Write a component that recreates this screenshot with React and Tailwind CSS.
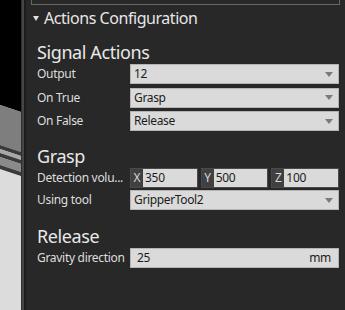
import React from "react";

const font = { fontFamily: '"Noto Sans", "Open Sans", sans-serif' };

function Arrow() {
  return (
    <svg width="8" height="5" viewBox="0 0 8 5" className="shrink-0">
      <path d="M0 0 H8 L4 5 Z" fill="#7a7a7a" />
    </svg>
  );
}

function Select({ value }) {
  return (
    <div className="flex-1 h-[20px] bg-[#dadada] border border-[#b4b4b4] flex items-center pl-[3px] pr-[5px] text-[12px] tracking-[-0.35px] text-[#1c1c1c]">
      <span className="flex-1 leading-none">{value}</span>
      <Arrow />
    </div>
  );
}

function Row({ label, children }) {
  return (
    <div className="flex items-center h-[20px]">
      <div className="w-[93px] shrink-0 text-[12px] tracking-[-0.3px] text-[#dedede] leading-none whitespace-nowrap">{label}</div>
      <div className="flex-1 flex gap-[3px]">{children}</div>
    </div>
  );
}

function Vec({ axis, value }) {
  return (
    <div className="flex-1 h-[20px] flex border border-[#4a4a4a]">
      <div className="w-[12px] bg-[#404040] text-[#d8d8d8] text-[12px] flex items-center justify-center leading-none">{axis}</div>
      <div className="flex-1 bg-[#dadada] flex items-center pl-[2px] text-[12px] tracking-[-0.3px] text-[#1c1c1c] leading-none">{value}</div>
    </div>
  );
}

function Title({ children, className = "" }) {
  return <div className={"text-[18px] tracking-[-0.4px] leading-[24px] text-[#e8e8e8] " + className}>{children}</div>;
}

export default function App() {
  return (
    <div className="w-[345px] h-[310px] flex bg-[#282828] overflow-hidden" style={font}>
      <div className="w-[21px] h-full shrink-0">
        <svg width="21" height="310" viewBox="0 0 21 310">
          <rect width="21" height="310" fill="#dcdcdc" />
          <polygon points="0,0 21,0 21,112 0,105" fill="#000" />
          <polygon points="0,105 21,112 21,152 0,145" fill="#7e7e7e" />
          <polygon points="0,145 21,152 21,156 0,149" fill="#3a3a3a" />
          <polygon points="0,149 21,156 21,160 0,153" fill="#a8a8a8" />
          <polygon points="0,153 21,160 21,164 0,157" fill="#3a3a3a" />
          <polygon points="0,157 21,164 21,172 0,165" fill="#8a8a8a" />
          <polygon points="0,165 21,172 21,176 0,169" fill="#3a3a3a" />
        </svg>
      </div>
      <div className="w-[1px] bg-[#2e2e2e] shrink-0" />
      <div className="w-[2px] bg-[#454545] shrink-0" />
      <div className="w-[2px] bg-[#1c1c1c] shrink-0" />
      <div className="flex-1 flex flex-col">
        <div className="mx-[5px] h-[5px] border-l border-r border-b border-[#686868]" />
        <div className="mt-[3px] pl-[7px] flex items-center gap-[5px] h-[20px]">
          <svg width="6" height="5" viewBox="0 0 6 5"><path d="M0 0 H6 L3 5 Z" fill="#e0e0e0" /></svg>
          <span className="text-[16px] tracking-[-0.45px] text-[#e6e6e6] leading-[20px]">Actions Configuration</span>
        </div>
        <div className="pl-[11px] pr-[6px] flex flex-col">
          <Title className="mt-[12px]">Signal Actions</Title>
          <div className="flex flex-col gap-[3.5px]">
            <Row label="Output"><Select value="12" /></Row>
            <Row label="On True"><Select value="Grasp" /></Row>
            <Row label="On False"><Select value="Release" /></Row>
          </div>
          <Title className="mt-[13px]">Grasp</Title>
          <div className="flex flex-col gap-[2px]">
            <Row label="Detection volu...">
              <Vec axis="X" value="350" />
              <Vec axis="Y" value="500" />
              <Vec axis="Z" value="100" />
            </Row>
            <Row label="Using tool"><Select value="GripperTool2" /></Row>
          </div>
          <Title className="mt-[14px]">Release</Title>
          <Row label="Gravity direction">
            <div className="flex-1 h-[20px] bg-[#dadada] border border-[#b4b4b4] flex items-center pl-[6px] pr-[7px] text-[12px] tracking-[-0.3px] text-[#1c1c1c] leading-none">
              <span className="flex-1">25</span>
              <span>mm</span>
            </div>
          </Row>
        </div>
      </div>
    </div>
  );
}
